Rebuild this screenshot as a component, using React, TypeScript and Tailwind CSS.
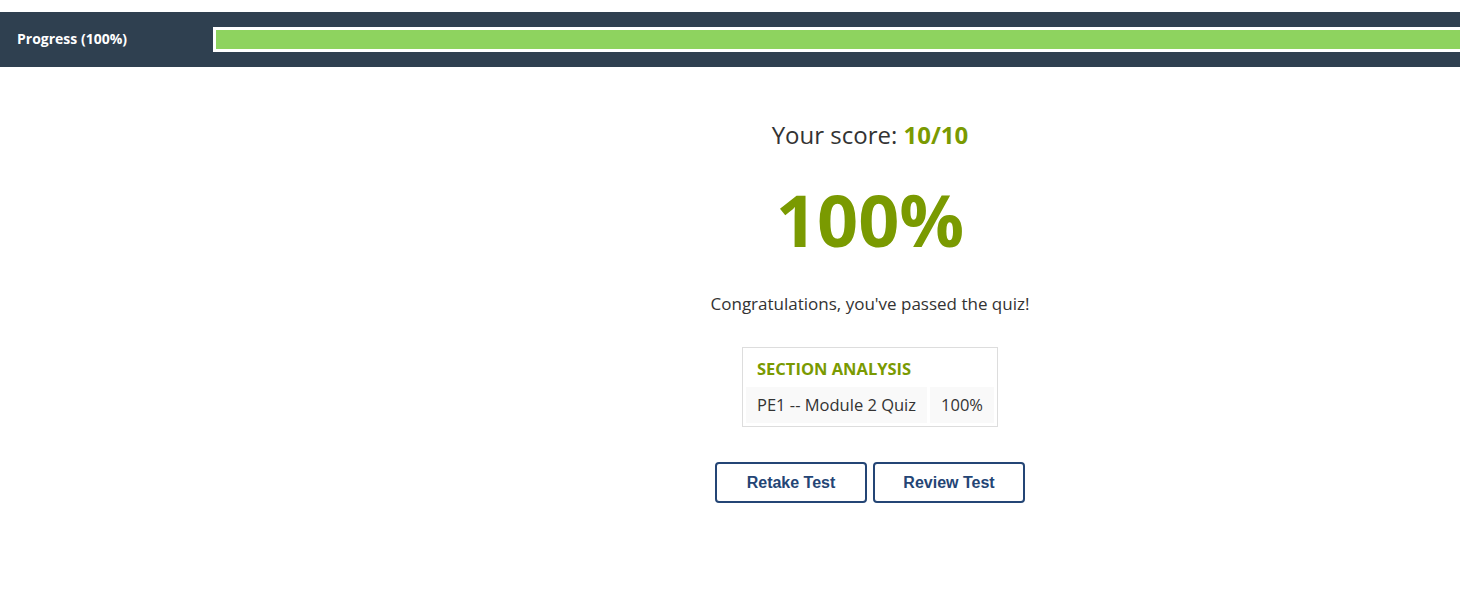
import React from 'react';

const green = 'text-[#7a9a01]';

const ProgressHeader = ({ percent }: { percent: number }) => (
    <div className="mt-3 flex h-[55px] items-center overflow-hidden bg-[#2f4050]">
        <div className="w-[213px] shrink-0 pb-[2px] pl-[17px] text-[14px] font-bold text-white">
            Progress ({percent}%)
        </div>
        <div className="-mr-4 h-[25px] flex-1 border-[3px] border-white bg-white">
            <div className="h-full bg-[#8ed35f]" style={{ width: `${percent}%` }} />
        </div>
    </div>
);

const SectionTable = () => (
    <table className="mt-[31px] border-separate border-spacing-[3px] border border-[#dddddd] text-[16.5px] leading-[24px] text-[#333]">
        <thead>
            <tr>
                <th colSpan={2} className={`h-[33px] px-[11px] pt-[2px] text-left font-bold ${green}`}>
                    SECTION ANALYSIS
                </th>
            </tr>
        </thead>
        <tbody>
            <tr>
                <td className="h-[36px] bg-[#f9f9f9] px-[11px]">PE1 -- Module 2 Quiz</td>
                <td className="h-[36px] bg-[#f9f9f9] px-[11px]">100%</td>
            </tr>
        </tbody>
    </table>
);

const OutlineButton = ({ label }: { label: string }) => (
    <button className="h-[41px] w-[152px] rounded-[4px] border-2 border-[#244575] bg-white font-['Liberation_Sans',Arial,sans-serif] text-[16px] font-bold text-[#244575]">
        {label}
    </button>
);

export default function App() {
    return (
        <div className="min-h-[604px] bg-white font-['Open_Sans',sans-serif]">
            <ProgressHeader percent={100} />
            <div className="flex">
                <div className="w-[280px] shrink-0" />
                <div className="flex flex-1 flex-col items-center">
                    <div className="mt-[53px] text-[24px] leading-[30px] text-[#333]">
                        Your score: <span className={`font-bold ${green}`}>10/10</span>
                    </div>
                    <div className={`mt-[33px] text-[72px] font-bold leading-[72px] ${green}`}>100%</div>
                    <div className="mt-[37px] text-[17px] leading-[24px] text-[#333]">
                        Congratulations, you've passed the quiz!
                    </div>
                    <SectionTable />
                    <div className="mt-[35px] flex gap-[6px]">
                        <OutlineButton label="Retake Test" />
                        <OutlineButton label="Review Test" />
                    </div>
                </div>
            </div>
        </div>
    );
}
